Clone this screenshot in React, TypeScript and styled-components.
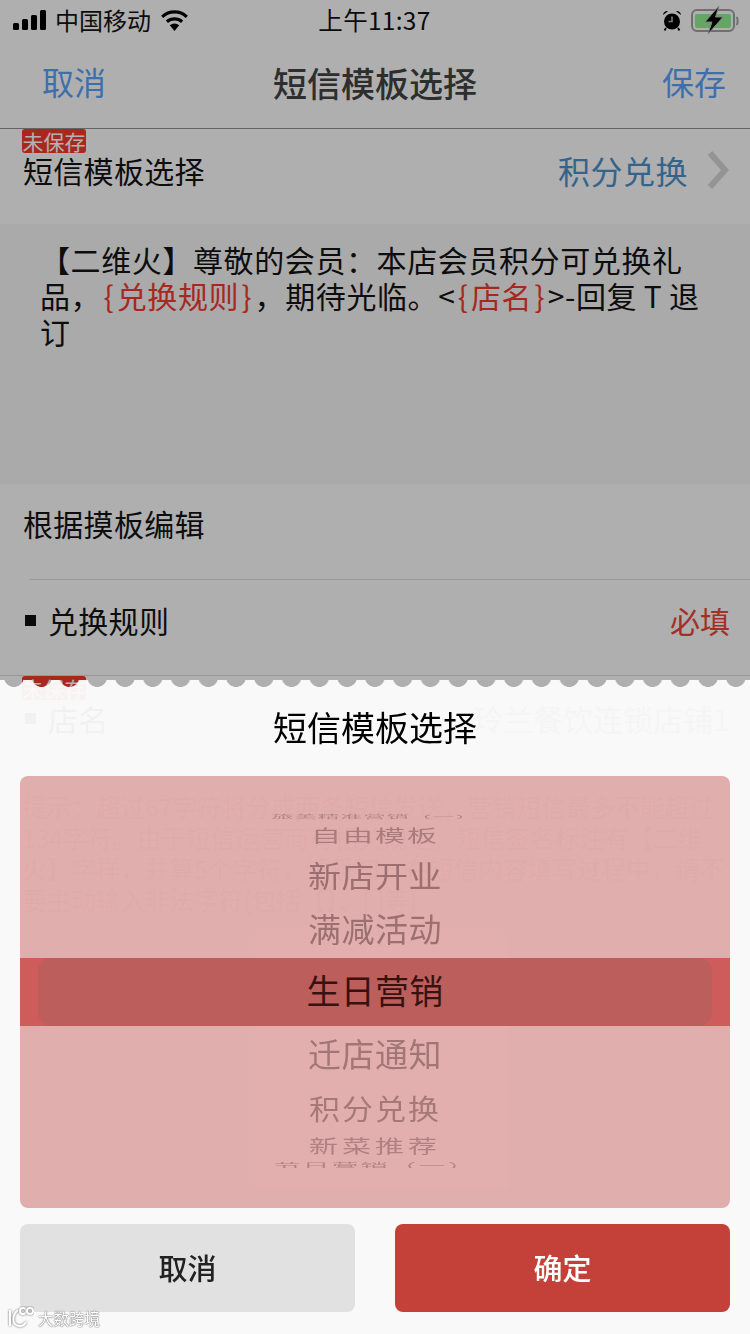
import React from "react";
import styled, { createGlobalStyle } from "styled-components";

const FONT = `"Noto Sans CJK SC", "Noto Sans", sans-serif`;

const Global = createGlobalStyle`
  html, body { margin: 0; padding: 0; background: #fbfbfb; }
  body { font-family: ${FONT}; }
`;

const Screen = styled.div`
  position: relative;
  width: 750px;
  height: 1334px;
  overflow: hidden;
  background: #fbfbfb;
  color: #000;
`;

/* ---------- status bar ---------- */
const StatusBar = styled.div`
  height: 40px;
  display: grid;
  grid-template-columns: 1fr auto 1fr;
  align-items: center;
  padding: 0 11px 0 13px;
  box-sizing: border-box;
  color: #000;
`;
const StatusLeft = styled.div`
  display: flex;
  align-items: center;
  gap: 9px;
`;
const StatusRight = styled.div`
  display: flex;
  align-items: center;
  justify-content: flex-end;
  gap: 9px;
`;
const Carrier = styled.span`
  font-size: 24px;
  line-height: 40px;
  color: #141414;
`;
const Clock = styled.span`
  font-size: 24.5px;
  line-height: 40px;
  color: #111;
  margin-left: -3px;
  letter-spacing: 0.3px;
`;

/* ---------- nav ---------- */
const NavBar = styled.div`
  height: 89px;
  box-sizing: border-box;
  display: flex;
  align-items: center;
  justify-content: space-between;
  padding: 0 24px 6px 42px;
  border-bottom: 1px solid #8e8e8e;
  position: relative;
`;
const NavAction = styled.span`
  font-size: 32px;
  line-height: 44px;
  color: #5aa0f8;
`;
const NavTitle = styled.span`
  position: absolute;
  left: 0;
  right: 0;
  top: 21px;
  text-align: center;
  font-size: 34px;
  line-height: 44px;
  font-weight: 500;
  color: #424242;
`;

/* ---------- form rows ---------- */
const Row = styled.div<{ $height: number; $inset?: number }>`
  position: relative;
  height: ${(p) => p.$height}px;
  display: flex;
  align-items: center;
  justify-content: space-between;
  padding: 0 20px 0 23px;
  box-sizing: border-box;
  &::after {
    content: "";
    position: absolute;
    left: ${(p) => p.$inset ?? 750}px;
    right: 0;
    bottom: 0;
    height: 1px;
    background: #d8d8d8;
  }
`;
const Badge = styled.span`
  position: absolute;
  left: 22px;
  top: 0;
  width: 64px;
  height: 24px;
  border-radius: 3px;
  background: #f23a2a;
  color: #fff;
  font-size: 21px;
  line-height: 24px;
  text-align: center;
`;
const Label = styled.span<{ $up?: number }>`
  font-size: 30px;
  line-height: 40px;
  letter-spacing: 0.3px;
  color: #141414;
  display: flex;
  align-items: center;
  gap: 12px;
  margin-top: ${(p) => -(p.$up ?? 0)}px;
`;
const Bullet = styled.i`
  width: 11px;
  height: 11px;
  margin-left: 2px;
  background: #111;
  display: block;
`;
const Value = styled.span<{ $tone: "blue" | "red" | "ghost"; $up?: number }>`
  font-size: 32px;
  letter-spacing: 0.5px;
  line-height: 40px;
  display: flex;
  align-items: center;
  margin-top: ${(p) => -(p.$up ?? 0)}px;
  color: ${(p) => (p.$tone === "blue" ? "#4c90c8" : p.$tone === "red" ? "#ea4438" : "#7b8fa8")};
`;
const ValueSmall = styled(Value)`
  font-size: 30px;
  letter-spacing: 0;
`;
const Chevron = styled.svg`
  margin-left: 18px;
`;

const Message = styled.div`
  height: 260px;
  box-sizing: border-box;
  padding: 17px 40px 0;
  background: #f4f4f4;
  font-size: 30px;
  line-height: 36px;
  letter-spacing: 0.6px;
  color: #141414;
`;
const Hot = styled.span`
  color: #ee3a2e;
  &::before,
  &::after {
    display: inline-block;
    width: 15.5px;
    text-align: center;
  }
  &::before {
    content: "{";
  }
  &::after {
    content: "}";
  }
`;

const Hint = styled.div`
  padding: 19px 22px 0;
  font-size: 24.6px;
  line-height: 31px;
  color: #777;
`;
const HelpMark = styled.div`
  margin: 312px 0 0 44px;
  font-size: 48px;
  line-height: 60px;
  color: #888;
`;

/* ---------- scrim and sheet ---------- */
const Scrim = styled.div`
  position: absolute;
  inset: 0;
  background: rgba(0, 0, 0, 0.3);
`;
const Sheet = styled.div`
  position: absolute;
  left: 0;
  right: 0;
  top: 680px;
  bottom: 0;
  background: rgba(252, 252, 252, 0.955);
  padding: 0 20px;
  display: flex;
  flex-direction: column;
  -webkit-mask-image: radial-gradient(circle at 50% -3px, transparent 9.6px, #000 10.2px), linear-gradient(#000, #000);
  mask-image: radial-gradient(circle at 50% -3px, transparent 9.6px, #000 10.2px), linear-gradient(#000, #000);
  -webkit-mask-size: 27.778px 8px, 100% calc(100% - 8px);
  mask-size: 27.778px 8px, 100% calc(100% - 8px);
  -webkit-mask-position: 0 0, 0 8px;
  mask-position: 0 0, 0 8px;
  -webkit-mask-repeat: repeat-x, no-repeat;
  mask-repeat: repeat-x, no-repeat;
`;
const SheetTitle = styled.div`
  height: 96px;
  flex: none;
  text-align: center;
  font-size: 34px;
  line-height: 94px;
  color: #000;
`;
const PickerBox = styled.div`
  height: 432px;
  flex: none;
  margin: 0 0 16px;
  border-radius: 8px;
  background: rgba(187, 52, 52, 0.38);
  padding-top: 36px;
  box-sizing: border-box;
`;
const Wheel = styled.div`
  display: flex;
  flex-direction: column;
  align-items: stretch;
  height: 356px;
  overflow: hidden;
`;
const WheelItem = styled.div<{ $h: number; $size: number; $squash: number; $gap: number; $alpha: number }>`
  height: ${(p) => p.$h}px;
  flex: none;
  display: flex;
  align-items: center;
  justify-content: center;
  overflow: hidden;
  white-space: nowrap;
  font-size: ${(p) => p.$size}px;
  letter-spacing: ${(p) => p.$gap}px;
  color: rgba(70, 35, 35, ${(p) => p.$alpha});
  span {
    display: block;
    line-height: 1;
    transform: translateY(-2px) scaleY(${(p) => p.$squash});
  }
`;
const Selected = styled.div`
  height: 68px;
  flex: none;
  background: #cd5c5a;
  padding: 0 18px;
`;
const SelectedInner = styled.div`
  height: 68px;
  border-radius: 14px;
  background: #bc5e5c;
  display: flex;
  align-items: center;
  justify-content: center;
  padding-bottom: 5px;
  box-sizing: border-box;
  font-size: 34px;
  letter-spacing: 0.3px;
  color: #38120f;
`;
const Buttons = styled.div`
  display: grid;
  grid-template-columns: 335px 335px;
  justify-content: space-between;
  flex: none;
`;
const ActionButton = styled.div<{ $primary?: boolean }>`
  height: 88px;
  border-radius: 8px;
  display: flex;
  align-items: center;
  justify-content: center;
  font-size: 29px;
  font-weight: 500;
  padding-bottom: 2px;
  box-sizing: border-box;
  background: ${(p) => (p.$primary ? "#c34138" : "#e1e1e1")};
  color: ${(p) => (p.$primary ? "#fff" : "#222")};
`;

/* ---------- watermark ---------- */
const Watermark = styled.div`
  position: absolute;
  left: 7px;
  bottom: 4px;
  display: flex;
  align-items: center;
  gap: 4px;
  font-size: 15.5px;
  line-height: 24px;
  color: #fff;
  text-shadow: 0 0 1.5px #666, 0 0 1px #666;
`;

const wheelItems = [
  { t: "旅美精准营销（一）", h: 12, s: 22, q: 0.2, g: 1, a: 0.3 },
  { t: "自由模板", h: 26, s: 30, q: 0.55, g: 2, a: 0.36 },
  { t: "新店开业", h: 53, s: 33, q: 0.9, g: 0.5, a: 0.45 },
  { t: "满减活动", h: 55, s: 33, q: 1, g: 0.5, a: 0.45 },
];
const wheelItemsBelow = [
  { t: "迁店通知", h: 58, s: 33, q: 1, g: 0.5, a: 0.4 },
  { t: "积分兑换", h: 50, s: 31, q: 0.92, g: 2, a: 0.38 },
  { t: "新菜推荐", h: 27, s: 29, q: 0.62, g: 4, a: 0.32 },
  { t: "节日营销（一）", h: 13, s: 27, q: 0.3, g: 2, a: 0.3 },
];

const Signal = () => (
  <svg width="33" height="20" viewBox="0 0 33 20" fill="#000">
    <rect x="0" y="13" width="6" height="7" rx="1.5" />
    <rect x="9" y="9" width="6" height="11" rx="1.5" />
    <rect x="18" y="5" width="6" height="15" rx="1.5" />
    <rect x="27" y="0" width="6" height="20" rx="1.5" />
  </svg>
);
const Wifi = () => (
  <svg width="29" height="22" viewBox="0 0 29 22">
    <path d="M14.5 22 L9.8 16.2 A7 7 0 0 1 19.2 16.2 Z" fill="#000" />
    <path d="M6.9 12.7 A11.5 11.5 0 0 1 22.1 12.7" fill="none" stroke="#000" strokeWidth="3.2" />
    <path d="M2.2 7.8 A18 18 0 0 1 26.8 7.8" fill="none" stroke="#000" strokeWidth="3.2" />
  </svg>
);
const Alarm = () => (
  <svg width="20" height="21" viewBox="0 0 20 21">
    <circle cx="10" cy="11.5" r="8" fill="#000" />
    <path d="M10 6.5 V11.5 H6.5" stroke="#b0b0b0" strokeWidth="1.6" fill="none" />
    <path d="M1 5 A4 4 0 0 1 6 1.2 Z M19 5 A4 4 0 0 0 14 1.2 Z" fill="#000" />
    <path d="M4 18 L2.5 20.5 M16 18 L17.5 20.5" stroke="#000" strokeWidth="1.8" />
  </svg>
);
const Battery = () => (
  <svg width="48" height="28" viewBox="0 0 48 28">
    <rect x="1" y="4" width="42" height="21" rx="5" fill="none" stroke="#a0a0a0" strokeWidth="2" />
    <path d="M45.5 11 C47 12 47 18 45.5 19" fill="none" stroke="#a0a0a0" strokeWidth="2" />
    <rect x="4" y="8" width="36" height="14" rx="2" fill="#90f090" />
    <path d="M28 0 L14 16 H21 L17 28 L32 11 H24.5 Z" fill="#000" stroke="#b8b8b8" strokeWidth="1" />
  </svg>
);
const MarkLogo = () => (
  <svg width="27" height="24" viewBox="0 0 27 24" fill="none" stroke="#fff" strokeWidth="2">
    <path d="M3 4 V20 M11 4 C4 10 5 20 13 20 C16 20 18 18 19 16" style={{ filter: "drop-shadow(0 0 1px #666)" }} />
    <circle cx="16" cy="5" r="3" style={{ filter: "drop-shadow(0 0 1px #666)" }} />
    <circle cx="23" cy="5" r="3" style={{ filter: "drop-shadow(0 0 1px #666)" }} />
  </svg>
);

export default function App() {
  return (
    <Screen>
      <Global />
      <StatusBar>
        <StatusLeft>
          <Signal />
          <Carrier>中国移动</Carrier>
          <Wifi />
        </StatusLeft>
        <Clock>上午11:37</Clock>
        <StatusRight>
          <Alarm />
          <Battery />
        </StatusRight>
      </StatusBar>
      <NavBar>
        <NavAction>取消</NavAction>
        <NavTitle>短信模板选择</NavTitle>
        <NavAction>保存</NavAction>
      </NavBar>

      <Row $height={95}>
        <Badge>未保存</Badge>
        <Label $up={13}>短信模板选择</Label>
        <Value $tone="blue" $up={13}>
          积分兑换
          <Chevron width="24" height="38" viewBox="0 0 24 38" fill="none" stroke="#d4d4d4" strokeWidth="6">
            <path d="M4 2 L19 19 L4 36" />
          </Chevron>
        </Value>
      </Row>

      <Message>
        【二维火】尊敬的会员：本店会员积分可兑换礼品，<Hot>兑换规则</Hot>，期待光临。&lt;<Hot>店名</Hot>&gt;-回复{"\u2009"}T{"\u2009"}退订
      </Message>

      <Row $height={96} $inset={30}>
        <Label $up={18}>根据摸板编辑</Label>
      </Row>
      <Row $height={96} $inset={0}>
        <Label $up={16}>
          <Bullet />
          兑换规则
        </Label>
        <ValueSmall $tone="red" $up={16}>必填</ValueSmall>
      </Row>
      <Row $height={96}>
        <Badge>未保存</Badge>
        <Label $up={12}>
          <Bullet />
          店名
        </Label>
        <ValueSmall $tone="ghost" $up={12}>玲兰餐饮连锁店铺1</ValueSmall>
      </Row>
      <Hint>
        提示：超过67字符将分成两条短信发送，营销短信最多不能超过134字符。由于短信运营商有相关规定，短信签名标注有【二维火】字样，并算5个字符，请悉知。在短信内容填写过程中，请不要主动输入非法字符(包括【】、[ ]等)
      </Hint>
      <HelpMark>?</HelpMark>

      <Scrim />
      <Sheet>
        <SheetTitle>短信模板选择</SheetTitle>
        <PickerBox>
          <Wheel>
            {wheelItems.map((i) => (
              <WheelItem key={i.t} $h={i.h} $size={i.s} $squash={i.q} $gap={i.g} $alpha={i.a}>
                <span>{i.t}</span>
              </WheelItem>
            ))}
            <Selected>
              <SelectedInner>生日营销</SelectedInner>
            </Selected>
            {wheelItemsBelow.map((i) => (
              <WheelItem key={i.t} $h={i.h} $size={i.s} $squash={i.q} $gap={i.g} $alpha={i.a}>
                <span>{i.t}</span>
              </WheelItem>
            ))}
          </Wheel>
        </PickerBox>
        <Buttons>
          <ActionButton>取消</ActionButton>
          <ActionButton $primary>确定</ActionButton>
        </Buttons>
      </Sheet>
      <Watermark>
        <MarkLogo />
        大数跨境
      </Watermark>
    </Screen>
  );
}
